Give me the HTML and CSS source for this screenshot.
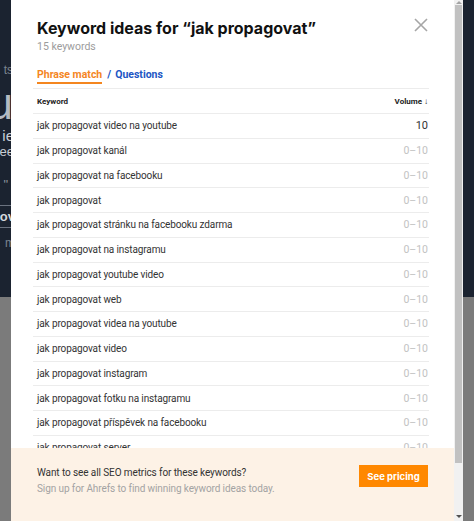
FILE: index.html
```html
<!DOCTYPE html>
<html lang="cs">
<head>
<meta charset="utf-8">
<title>Keyword ideas</title>
<link rel="stylesheet" href="styles.css">
</head>
<body>
<div class="page">
  <div class="side side-left">
    <div class="side-dark">
      <span class="bg-t bg-ts">ts</span>
      <span class="bg-t bg-u">u</span>
      <span class="bg-t bg-ie">ie</span>
      <span class="bg-t bg-ee">ee</span>
      <span class="bg-t bg-q">"</span>
      <span class="bg-t bg-ow">ov</span>
      <span class="bg-t bg-m">m</span>
    </div>
    <div class="side-gray"></div>
  </div>

  <div class="modal">
    <div class="head">
      <div class="title-row">
        <h1 class="title">Keyword ideas for “jak propagovat”</h1>
        <svg class="close" width="14" height="14" viewBox="0 0 14 14"><path d="M1 1 L13 13 M13 1 L1 13" stroke="#a6a6a6" stroke-width="1.6" fill="none"/></svg>
      </div>
      <div class="count">15 keywords</div>
      <div class="tabs">
        <span class="tab active">Phrase match</span>
        <span class="tab-sep">/</span>
        <span class="tab link">Questions</span>
      </div>
    </div>

    <div class="table">
      <div class="row header">
        <span class="kw">Keyword</span>
        <span class="vol">Volume <span class="arrow">↓</span><span class="tick"></span></span>
      </div>
      <div class="row"><span class="kw">jak propagovat video na youtube</span><span class="vol dark">10</span></div>
      <div class="row"><span class="kw">jak propagovat kanál</span><span class="vol">0–10</span></div>
      <div class="row"><span class="kw">jak propagovat na facebooku</span><span class="vol">0–10</span></div>
      <div class="row"><span class="kw">jak propagovat</span><span class="vol">0–10</span></div>
      <div class="row"><span class="kw">jak propagovat stránku na facebooku zdarma</span><span class="vol">0–10</span></div>
      <div class="row"><span class="kw">jak propagovat na instagramu</span><span class="vol">0–10</span></div>
      <div class="row"><span class="kw">jak propagovat youtube video</span><span class="vol">0–10</span></div>
      <div class="row"><span class="kw">jak propagovat web</span><span class="vol">0–10</span></div>
      <div class="row"><span class="kw">jak propagovat videa na youtube</span><span class="vol">0–10</span></div>
      <div class="row"><span class="kw">jak propagovat video</span><span class="vol">0–10</span></div>
      <div class="row"><span class="kw">jak propagovat instagram</span><span class="vol">0–10</span></div>
      <div class="row"><span class="kw">jak propagovat fotku na instagramu</span><span class="vol">0–10</span></div>
      <div class="row"><span class="kw">jak propagovat příspěvek na facebooku</span><span class="vol">0–10</span></div>
      <div class="row"><span class="kw">jak propagovat server</span><span class="vol">0–10</span></div>
    </div>

    <div class="footer">
      <div class="footer-text">
        <div class="footer-title">Want to see all SEO metrics for these keywords?</div>
        <div class="footer-sub">Sign up for Ahrefs to find winning keyword ideas today.</div>
      </div>
      <button class="btn">See pricing</button>
    </div>
  </div>

  <div class="scrollbar">
    <div class="sb-arrow sb-up"></div>
    <div class="sb-thumb"></div>
    <div class="sb-rest"></div>
    <div class="sb-arrow sb-down"></div>
  </div>

  <div class="side side-right">
    <div class="side-dark"></div>
    <div class="side-gray"></div>
  </div>
</div>
</body>
</html>
```

FILE: styles.css
```css
html, body {
  margin: 0;
  padding: 0;
}
body {
  width: 474px;
  height: 521px;
  overflow: hidden;
  font-family: "Roboto", "Liberation Sans", sans-serif;
}
.page {
  display: flex;
  width: 474px;
  height: 521px;
}
.side {
  display: flex;
  flex-direction: column;
  overflow: hidden;
}
.side-left { width: 11px; }
.side-right { width: 11px; }
.side-dark {
  height: 297px;
  background: #1b2330;
  display: flex;
  flex-direction: column;
  align-items: flex-end;
  font-family: "Liberation Sans", sans-serif;
  color: #7c8591;
}
.side-gray {
  flex: 1;
  background: #7b7b7b;
}
.bg-t { display: block; white-space: nowrap; line-height: 1; }
.bg-ts { margin-top: 64px; font-size: 12px; margin-right: -2px; }
.bg-u { margin-top: 8px; font-size: 44px; color: #b5bbc3; margin-right: -2px; line-height: 40px; }
.bg-ie { margin-top: 4px; font-size: 15px; color: #c9ced4; margin-right: -3px; }
.bg-ee { margin-top: 2px; font-size: 13px; color: #c9ced4; margin-right: -3px; }
.bg-q { margin-top: 20px; font-size: 13px; color: #8b929c; margin-right: 3px; }
.bg-ow { margin-top: 14px; font-size: 13px; font-weight: bold; color: #d4d8dd; border-top: 1px solid #6b7380; border-bottom: 1px solid #6b7380; padding: 4px 0; margin-right: -4px; }
.bg-m { margin-top: 9px; font-size: 12px; margin-right: -4px; }

.modal {
  width: 443px;
  height: 521px;
  background: #fff;
  display: flex;
  flex-direction: column;
  overflow: hidden;
}
.head {
  padding: 18px 26px 0 26px;
}
.title-row {
  display: flex;
  justify-content: space-between;
  align-items: flex-start;
}
.title {
  margin: 0;
  font-family: "Inter", "Liberation Sans", sans-serif;
  font-weight: 700;
  font-size: 16px;
  line-height: 20px;
  color: #111;
}
.count {
  margin-top: 2px;
  font-size: 10.5px;
  line-height: 14px;
  color: #9c9c9c;
}
.tabs {
  margin-top: 14px;
  display: flex;
  align-items: flex-start;
  font-size: 10.5px;
  font-weight: 700;
  line-height: 14px;
}
.tab.active {
  color: #f4861f;
  border-bottom: 2px solid #f4861f;
}
.tab-sep {
  color: #2155c4;
  margin: 0 4px 0 5px;
}
.tab.link { color: #2155c4; }

.table {
  flex: 1;
  overflow: hidden;
  margin: 4px 25px 0 22px;
  border-top: 1px solid #ececec;
}
.row {
  display: flex;
  justify-content: space-between;
  align-items: center;
  height: 23.75px;
  border-bottom: 1px solid #ececec;
  padding: 0 1px 0 4px;
  font-size: 10px;
  letter-spacing: -0.12px;
  color: #333;
}
.row.header {
  height: 24px;
  font-size: 8px;
  letter-spacing: 0;
  font-weight: 700;
  color: #222;
}
.vol { color: #c2c2c2; letter-spacing: 0; font-size: 10.5px; }
.vol.dark { color: #333; font-size: 11px; }
.header .vol { color: #222; display: flex; align-items: center; font-size: 8px; }
.arrow { font-size: 8px; margin-left: 2px; }
.tick {
  width: 1px;
  height: 6px;
  background: #c8c8c8;
  margin: -8px -4px 0 3px;
}

.footer {
  height: 73px;
  flex-shrink: 0;
  box-sizing: border-box;
  background: #fdf2e6;
  display: flex;
  justify-content: space-between;
  align-items: flex-start;
  padding: 17px 26px 0 26px;
}
.footer-title {
  font-size: 10px;
  letter-spacing: -0.1px;
  line-height: 16px;
  color: #333;
}
.footer-sub {
  font-size: 10px;
  letter-spacing: -0.1px;
  line-height: 16px;
  color: #a3a3a3;
}
.btn {
  width: 69px;
  height: 22px;
  border: 0;
  border-radius: 0;
  padding: 0;
  margin-top: 0;
  background: #ff8800;
  color: #fff;
  font-family: "Inter", "Liberation Sans", sans-serif;
  font-weight: 700;
  font-size: 9.5px;
}

.scrollbar {
  width: 9px;
  height: 521px;
  background: #f1f1f1;
  display: flex;
  flex-direction: column;
  align-items: center;
}
.sb-arrow {
  width: 0;
  height: 0;
  border-left: 3px solid transparent;
  border-right: 3px solid transparent;
}
.sb-up {
  border-bottom: 3px solid #a3a3a3;
  margin-top: 1px;
}
.sb-down {
  border-top: 3px solid #505050;
  margin-bottom: 3px;
}
.sb-thumb {
  width: 7px;
  height: 458px;
  margin-top: 1px;
  background: #c1c1c1;
}
.sb-rest { flex: 1; }
```
